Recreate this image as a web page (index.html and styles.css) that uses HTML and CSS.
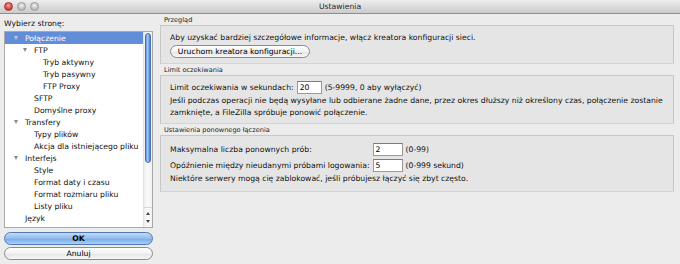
FILE: index.html
```html
<!DOCTYPE html>
<html lang="pl">
<head>
<meta charset="utf-8">
<title>Ustawienia</title>
<link rel="stylesheet" href="styles.css">
</head>
<body>
<div class="window">
  <div class="titlebar">
    <div class="lights">
      <span class="light red"></span>
      <span class="light"></span>
      <span class="light"></span>
    </div>
    <div class="title">Ustawienia</div>
  </div>
  <div class="content">
    <div class="left">
      <div class="pick-label">Wybierz stronę:</div>
      <div class="tree">
        <div class="rows">
          <div class="row lvl0 sel"><span class="tog open"></span>Połączenie</div>
          <div class="row lvl1"><span class="tog open"></span>FTP</div>
          <div class="row lvl2"><span class="tog"></span>Tryb aktywny</div>
          <div class="row lvl2"><span class="tog"></span>Tryb pasywny</div>
          <div class="row lvl2"><span class="tog"></span>FTP Proxy</div>
          <div class="row lvl1"><span class="tog"></span>SFTP</div>
          <div class="row lvl1"><span class="tog"></span>Domyślne proxy</div>
          <div class="row lvl0"><span class="tog open"></span>Transfery</div>
          <div class="row lvl1"><span class="tog"></span>Typy plików</div>
          <div class="row lvl1"><span class="tog"></span>Akcja dla istniejącego pliku</div>
          <div class="row lvl0"><span class="tog open"></span>Interfejs</div>
          <div class="row lvl1"><span class="tog"></span>Style</div>
          <div class="row lvl1"><span class="tog"></span>Format daty i czasu</div>
          <div class="row lvl1"><span class="tog"></span>Format rozmiaru pliku</div>
          <div class="row lvl1"><span class="tog"></span>Listy pliku</div>
          <div class="row lvl0"><span class="tog"></span>Język</div>
        </div>
        <div class="scrollbar">
          <div class="track"><div class="thumb"></div></div>
          <div class="arrows">
            <span class="arr up"></span>
            <span class="arr down"></span>
          </div>
        </div>
      </div>
      <div class="btn ok">OK</div>
      <div class="btn cancel">Anuluj</div>
    </div>
    <div class="right">
      <div class="sec-head">Przegląd</div>
      <div class="box box1">
        <div class="line">Aby uzyskać bardziej szczegółowe informacje, włącz kreatora konfiguracji sieci.</div>
        <div class="pill">Uruchom kreatora konfiguracji...</div>
      </div>
      <div class="sec-head">Limit oczekiwania</div>
      <div class="box box2">
        <div class="field-row">
          <span>Limit oczekiwania w sekundach:</span>
          <span class="input w24">20</span>
          <span>(5-9999, 0 aby wyłączyć)</span>
        </div>
        <div class="para">Jeśli podczas operacji nie będą wysyłane lub odbierane żadne dane, przez okres dłuższy niż określony czas, połączenie zostanie zamknięte, a FileZilla spróbuje ponowić połączenie.</div>
      </div>
      <div class="sec-head">Ustawienia ponownego łączenia</div>
      <div class="box box3">
        <div class="grid">
          <span>Maksymalna liczba ponownych prób:</span>
          <span class="input w30">2</span>
          <span>(0-99)</span>
          <span>Opóźnienie między nieudanymi próbami logowania:</span>
          <span class="input w30">5</span>
          <span>(0-999 sekund)</span>
        </div>
        <div class="line">Niektóre serwery mogą cię zablokować, jeśli próbujesz łączyć się zbyt często.</div>
      </div>
    </div>
  </div>
</div>
</body>
</html>
```
FILE: styles.css
```css
* { box-sizing: border-box; }
html, body { margin: 0; padding: 0; }
body {
  width: 680px;
  height: 264px;
  overflow: hidden;
  background: #ececec;
  font-family: "DejaVu Sans", "Noto Sans", sans-serif;
  font-size: 7.7px;
  color: #111;
}
.window { width: 680px; height: 264px; display: flex; flex-direction: column; }
.titlebar {
  height: 14px;
  flex: none;
  display: flex;
  align-items: center;
  background: linear-gradient(#ededed, #cbcbcb);
  border-bottom: 1px solid #8e8e8e;
  position: relative;
}
.lights { display: flex; gap: 4px; padding-left: 4px; }
.light {
  width: 9px; height: 9px; border-radius: 50%;
  background: radial-gradient(circle at 50% 35%, #f2f2f2, #b9b9b9 70%);
  border: 1px solid #9a9a9a;
}
.light.red {
  background: radial-gradient(circle at 50% 35%, #f7a59c, #d3352b 70%);
  border-color: #a8342c;
}
.title {
  position: absolute; left: 0; right: 0; top: 0; bottom: 0;
  display: flex; align-items: center; justify-content: center;
  color: #2a2a2a; font-size: 7.7px;
}
.content { flex: 1; display: flex; padding: 0 6px 0 4px; gap: 4px; }
.left { width: 149px; display: flex; flex-direction: column; }
.pick-label { height: 17px; display: flex; align-items: center; color: #111; padding-top: 1px; }
.tree {
  height: 197px;
  background: #fff;
  border: 1px solid #a9a9a9;
  display: flex;
}
.rows { flex: 1; padding-top: 0; }
.row {
  height: 12px;
  display: flex;
  align-items: center;
  white-space: nowrap;
}
.row.lvl0 { padding-left: 6px; }
.row.lvl1 { padding-left: 15px; }
.row.lvl2 { padding-left: 24px; }
.row.sel { background: #628dd9; color: #fff; }
.tog { width: 9px; height: 12px; margin-right: 5px; flex: none; display: flex; align-items: center; justify-content: center; }
.tog.open::before {
  content: "";
  width: 0; height: 0;
  border-left: 2.5px solid transparent;
  border-right: 2.5px solid transparent;
  border-top: 4px solid #8a8a8a;
}
.sel .tog.open::before { border-top-color: #b9c9e8; }
.scrollbar {
  width: 9px;
  flex: none;
  display: flex;
  flex-direction: column;
  border-left: 1px solid #e2e2e2;
  background: linear-gradient(90deg, #ececec, #fafafa 40%, #f2f2f2);
}
.track { flex: 1; padding: 1px 0 0 0; }
.thumb {
  height: 130px;
  margin: 0 1px;
  border-radius: 4px;
  background: linear-gradient(90deg, #5585d3, #a9cbf4 35%, #7aa7e8 70%, #4576c8);
  border: 1px solid #4a74b8;
}
.arrows { height: 20px; display: flex; flex-direction: column; align-items: center; justify-content: space-around; padding: 2px 0; border-top: 1px solid #d6d6d6; }
.arr { width: 0; height: 0; border-left: 2px solid transparent; border-right: 2px solid transparent; }
.arr.up { border-bottom: 3px solid #444; }
.arr.down { border-top: 3px solid #444; }
.btn {
  height: 13px;
  border-radius: 7px;
  display: flex; align-items: center; justify-content: center;
  color: #000;
}
.btn.ok {
  margin-top: 4px;
  font-weight: bold;
  background: linear-gradient(#c4dcf7, #8fbaec 50%, #74a9ea 51%, #a9d0f7);
  border: 1px solid #5178b5;
}
.btn.cancel {
  margin-top: 2px;
  background: linear-gradient(#ffffff, #f1f1f1 50%, #e4e4e4 51%, #f7f7f7);
  border: 1px solid #8b8b8b;
}
.right { flex: 1; display: flex; flex-direction: column; padding-left: 3px; }
.sec-head { height: 11px; display: flex; align-items: center; font-size: 6.6px; color: #222; padding-left: 4px; }
.box {
  background: #e5e5e5;
  border: 1px solid #c6c6c6;
  border-bottom-color: #d4d4d4;
  padding-left: 9px;
}
.box1 { height: 39px; padding-top: 5px; }
.box2 { height: 49px; padding-top: 5px; }
.box3 { height: 57px; padding-top: 7px; }
.line { height: 12px; display: flex; align-items: center; white-space: nowrap; }
.pill {
  margin-top: 2px;
  width: 140px;
  height: 13px;
  border-radius: 7px;
  border: 1px solid #8a8a8a;
  background: linear-gradient(#ffffff, #f2f2f2 50%, #e3e3e3 51%, #f6f6f6);
  display: flex; align-items: center; justify-content: center;
  color: #000;
}
.field-row { height: 13px; display: flex; align-items: center; gap: 3px; white-space: nowrap; }
.input {
  height: 13px;
  background: #fff;
  border: 1px solid #9a9a9a;
  border-top-color: #7c7c7c;
  display: flex; align-items: center;
  padding-left: 2px;
  color: #000;
}
.w24 { width: 25px; }
.w30 { width: 30px; }
.para { line-height: 12px; margin-top: 1px; padding-right: 2px; }
.grid {
  display: grid;
  grid-template-columns: auto 30px auto;
  column-gap: 3px;
  row-gap: 3px;
  justify-content: start;
  align-items: center;
  white-space: nowrap;
}
```
